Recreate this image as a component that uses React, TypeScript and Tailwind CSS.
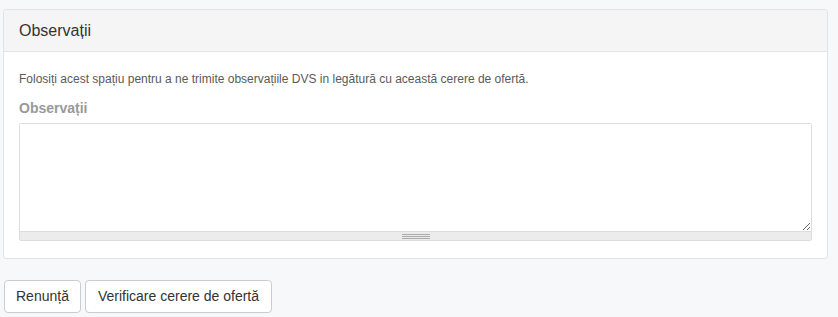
const App = () => {
    return (
        <div className="min-h-screen bg-[#f7f8fa] pt-[9px] pl-[3px] pr-[10px]" style={{ fontFamily: '"Liberation Sans", Arial, sans-serif' }}>
            <section className="bg-white border border-[#e1e3e6] rounded-[3px]">
                <div className="h-[42px] bg-[#f5f5f5] border-b border-[#e3e3e3] px-[15px] flex items-center rounded-t-[3px]">
                    <h2 className="text-[16px] text-[#333]">Observații</h2>
                </div>
                <div className="px-[15px] pt-[19px] pb-[17px]">
                    <p className="text-[12px] leading-[17px] text-[#5a5a5a]">
                        Folosiți acest spațiu pentru a ne trimite observațiile DVS in legătură cu această cerere de ofertă.
                    </p>
                    <label className="block mt-[11px] text-[14px] leading-[18px] font-bold text-[#999]">Observații</label>
                    <div className="mt-[6px] border border-[#ddd] rounded-[2px]">
                        <textarea className="block w-full h-[107px] resize-y bg-white outline-none text-[13px] p-[6px]" />
                        <div className="h-[9px] bg-[#ececec] border-t border-[#ddd] flex flex-col items-center justify-center gap-[1px]">
                            <div className="w-[28px] h-[1px] bg-[#aaa]" />
                            <div className="w-[28px] h-[1px] bg-[#aaa]" />
                            <div className="w-[28px] h-[1px] bg-[#aaa]" />
                        </div>
                    </div>
                </div>
            </section>

            <div className="mt-[21px] flex gap-[4px] ml-[1px]">
                <button className="h-[33px] px-[11px] text-[14px] text-[#333] bg-white border border-[#ccc] rounded-[4px]">Renunță</button>
                <button className="h-[33px] px-[12px] text-[14px] text-[#333] bg-white border border-[#ccc] rounded-[4px]">Verificare cerere de ofertă</button>
            </div>
        </div>
    )
}

export default App
